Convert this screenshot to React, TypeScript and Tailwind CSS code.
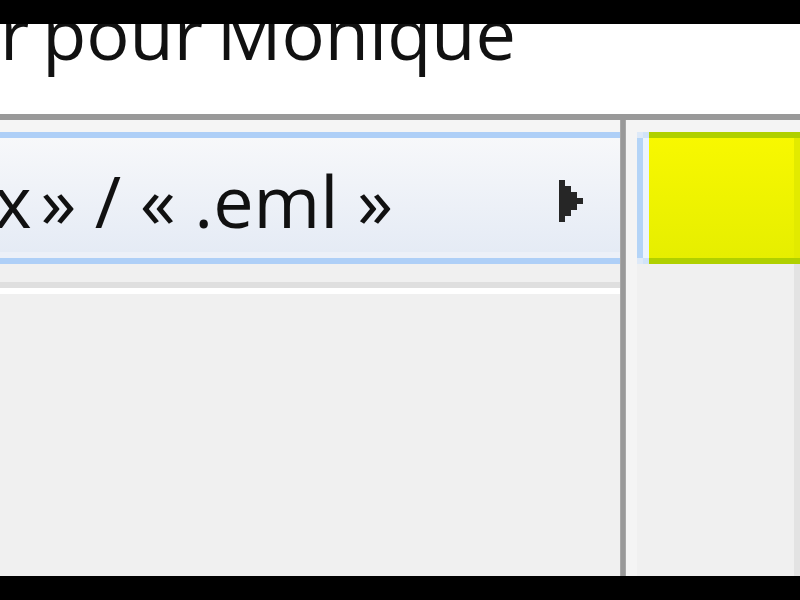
import React from 'react';

const Arrow: React.FC = () => (
  <svg width="24" height="42" viewBox="0 0 24 42" shapeRendering="crispEdges" className="shrink-0 mt-[42px] mr-[37px]">
    <path d="M0 0H6V6H12V12H18V18H24V24H18V30H12V36H6V42H0Z" fill="#262626" />
  </svg>
);

const App: React.FC = () => {
  return (
    <div className="w-[800px] h-[600px] bg-black flex flex-col overflow-hidden" style={{ fontFamily: '"Open Sans", "Noto Sans", sans-serif' }}>
      {/* top band */}
      <div className="h-[24px] shrink-0 bg-black" />

      {/* heading strip */}
      <div className="h-[90px] shrink-0 bg-white overflow-hidden">
        <div className="-mt-[28px] text-[72px] leading-[72px] text-[#111] whitespace-nowrap">
          <span>r</span>
          <span className="-ml-[6px]"> pour</span>
          <span className="-ml-[5px]"> Monique</span>
        </div>
      </div>
      <div className="h-[6px] shrink-0 bg-[#999999]" />

      {/* main area */}
      <div className="flex flex-1 min-h-0">
        {/* left panel */}
        <div className="w-[620px] shrink-0 flex flex-col bg-[#f0f0f0]">
          <div className="h-[12px] bg-[#f5f5f5]" />
          <div className="h-[132px] flex flex-col">
            <div className="h-[6px] bg-[#aecff7]" />
            <div className="flex-1 flex items-start overflow-hidden bg-[linear-gradient(to_bottom,#f7f8fa,#e5ebf5_95%,#ecf0f8_95%)]">
              <div className="flex-1 mt-[26px] -ml-[6px] text-[72px] leading-[72px] text-[#111] whitespace-nowrap">
                <span>x</span>
                <span className="-ml-[10px]"> » / « .eml »</span>
              </div>
              <Arrow />
            </div>
            <div className="h-[6px] bg-[#aecff7]" />
          </div>
          <div className="h-[18px] bg-[#f0f0f0]" />
          <div className="h-[6px] bg-[#dfdfdf]" />
          <div className="h-[6px] bg-white" />
          <div className="flex-1 bg-[#f0f0f0]" />
        </div>

        {/* divider */}
        <div className="w-[6px] shrink-0 bg-[#999999] border-x border-[#a8a8a8]" />

        {/* right panel */}
        <div className="flex-1 flex bg-[#f0f0f0]">
          <div className="w-[11px] shrink-0 bg-[#f4f4f4]" />
          <div className="flex-1 flex flex-col">
            <div className="h-[12px] bg-[#f4f4f4]" />
            <div className="h-[132px] flex">
              <div className="w-[6px] flex flex-col">
                <div className="h-[6px] bg-[#dde9f8]" />
                <div className="flex-1 bg-[#b4d4f7]" />
                <div className="h-[6px] bg-[#dde9f8]" />
              </div>
              <div className="w-[6px] flex flex-col">
                <div className="h-[6px] bg-[#d0e3f8]" />
                <div className="flex-1 bg-[#ecf4fd]" />
                <div className="h-[6px] bg-[#d0e3f8]" />
              </div>
              <div className="flex-1 flex flex-col">
                <div className="h-[6px] bg-[#b0d000]" />
                <div className="flex-1 bg-gradient-to-b from-[#f8f800] to-[#e6ee00] border-r-[6px] border-[#e2ea00]" />
                <div className="h-[6px] bg-[#b0d000]" />
              </div>
            </div>
            <div className="flex-1 flex">
              <div className="flex-1" />
              <div className="w-[6px] bg-[#e3e3e3]" />
            </div>
          </div>
        </div>
      </div>

      {/* bottom band */}
      <div className="h-[24px] shrink-0 bg-black" />
    </div>
  );
};

export default App;
